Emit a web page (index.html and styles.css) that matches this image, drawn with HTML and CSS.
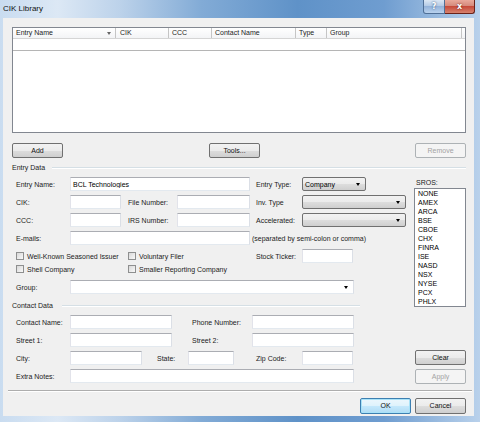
FILE: index.html
```html
<!DOCTYPE html>
<html lang="en">
<head>
    <meta charset="UTF-8">
    <meta name="viewport" content="width=device-width, initial-scale=1.0">
    <title>CIK Library</title>
    <link rel="stylesheet" href="styles.css">
</head>
<body>
    <div class="titlebar">
        <div class="window-title">CIK Library</div>
        <div class="caption-buttons">
            <button class="caption-btn help-btn">?</button>
            <button class="caption-btn close-btn">x</button>
        </div>
    </div>

    <div class="dialog">
        <!-- Entries list -->
        <div class="listview">
            <div class="lv-header">
                <div class="lv-col col-name">Entry Name<span class="sort-arrow"></span></div>
                <div class="lv-col col-cik">CIK</div>
                <div class="lv-col col-ccc">CCC</div>
                <div class="lv-col col-contact">Contact Name</div>
                <div class="lv-col col-type">Type</div>
                <div class="lv-col col-group">Group</div>
            </div>
            <div class="lv-row"></div>
        </div>

        <div class="button-row">
            <button class="btn">Add</button>
            <button class="btn tools-btn">Tools...</button>
            <button class="btn remove-btn" disabled>Remove</button>
        </div>

        <div class="legend">Entry Data</div>

        <div class="main">
            <div class="form">
                <div class="row">
                    <span class="lbl">Entry Name:</span>
                    <input type="text" class="tb w-180" value="BCL Technologies">
                    <span class="lbl-type">Entry Type:</span>
                    <div class="combo w-64">Company</div>
                </div>
                <div class="row">
                    <span class="lbl">CIK:</span>
                    <input type="text" class="tb w-51">
                    <span class="lbl-mid">File Number:</span>
                    <input type="text" class="tb w-73">
                    <span class="lbl-type">Inv. Type</span>
                    <div class="combo w-104"></div>
                </div>
                <div class="row">
                    <span class="lbl">CCC:</span>
                    <input type="text" class="tb w-51">
                    <span class="lbl-mid">IRS Number:</span>
                    <input type="text" class="tb w-73">
                    <span class="lbl-type">Accelerated:</span>
                    <div class="combo w-104"></div>
                </div>
                <div class="row">
                    <span class="lbl">E-mails:</span>
                    <input type="text" class="tb w-180">
                    <span class="note">(separated by semi-colon or comma)</span>
                </div>
                <div class="row">
                    <span class="check-col first"><span class="check"></span>Well-Known Seasoned Issuer</span>
                    <span class="check-col second"><span class="check"></span>Voluntary Filer</span>
                    <span class="lbl-type">Stock Ticker:</span>
                    <input type="text" class="tb w-51">
                </div>
                <div class="row short">
                    <span class="check-col first"><span class="check"></span>Shell Company</span>
                    <span class="check-col second"><span class="check"></span>Smaller Reporting Company</span>
                </div>
                <div class="row group-row">
                    <span class="lbl">Group:</span>
                    <div class="combo combo-edit w-284"></div>
                </div>

                <div class="legend contact-legend">Contact Data</div>

                <div class="contact">
                    <div class="row">
                        <span class="lbl">Contact Name:</span>
                        <input type="text" class="tb w-102">
                        <span class="lbl-contact">Phone Number:</span>
                        <input type="text" class="tb w-102">
                    </div>
                    <div class="row">
                        <span class="lbl">Street 1:</span>
                        <input type="text" class="tb w-102">
                        <span class="lbl-contact">Street 2:</span>
                        <input type="text" class="tb w-102">
                    </div>
                    <div class="row">
                        <span class="lbl">City:</span>
                        <input type="text" class="tb w-72">
                        <span class="lbl-state">State:</span>
                        <input type="text" class="tb w-46">
                        <span class="lbl-zip">Zip Code:</span>
                        <input type="text" class="tb w-51">
                    </div>
                    <div class="row">
                        <span class="lbl">Extra Notes:</span>
                        <input type="text" class="tb w-284">
                    </div>
                </div>
            </div>

            <div class="side">
                <div class="sros-label">SROS:</div>
                <ul class="listbox">
                    <li>NONE</li>
                    <li>AMEX</li>
                    <li>ARCA</li>
                    <li>BSE</li>
                    <li>CBOE</li>
                    <li>CHX</li>
                    <li>FINRA</li>
                    <li>ISE</li>
                    <li>NASD</li>
                    <li>NSX</li>
                    <li>NYSE</li>
                    <li>PCX</li>
                    <li>PHLX</li>
                </ul>
                <button class="btn clear-btn">Clear</button>
                <button class="btn apply-btn" disabled>Apply</button>
            </div>
        </div>

        <div class="separator"></div>

        <div class="footer">
            <button class="btn btn-default">OK</button>
            <button class="btn">Cancel</button>
        </div>
    </div>
</body>
</html>
```

FILE: styles.css
```css
* {
    margin: 0;
    padding: 0;
    box-sizing: border-box;
    font-family: 'Liberation Sans', Arial, sans-serif;
}

body {
    width: 480px;
    height: 422px;
    overflow: hidden;
    font-size: 7px;
    color: #1b1b1b;
    background: linear-gradient(to right, #c9dcf0 0%, #dce8f5 12%, #bcd2ea 25%, #82abd6 42%, #5f92c8 62%, #6f9dd0 80%, #b9d1eb 100%);
}

/* Title bar */
.titlebar {
    display: flex;
    height: 18px;
}

.window-title {
    padding: 4px 0 0 3px;
    font-size: 8px;
    line-height: 9px;
    color: #111;
}

.caption-buttons {
    margin-left: auto;
    margin-right: 5px;
    display: flex;
    height: 14px;
}

.caption-btn {
    height: 14px;
    border: 1px solid;
    border-top: none;
    font-family: 'DejaVu Sans', sans-serif;
    font-weight: bold;
    font-size: 8px;
    line-height: 12px;
    color: #fff;
}

.help-btn {
    width: 22px;
    border-color: #4f6f96;
    border-radius: 0 0 0 3px;
    background: linear-gradient(#dbe7f4, #b4cbe6 45%, #94b3da 50%, #b9d2ee);
    text-shadow: 0 0 2px #23446e;
}

.close-btn {
    width: 30px;
    border-color: #6a2219;
    border-left: none;
    border-radius: 0 0 3px 0;
    background: linear-gradient(#e9a99b, #d58a7c 45%, #c74a3a 50%, #d7836f);
    text-shadow: 0 0 2px #5c1a12;
}

/* Dialog client area */
.dialog {
    margin: 0 6px 0 3px;
    height: 398px;
    padding: 9px 8px 0 9px;
    background: #f0f0f0;
}

/* List view */
.listview {
    height: 106px;
    border: 1px solid #828790;
    background: #fff;
}

.lv-header {
    display: flex;
    height: 11px;
    background: linear-gradient(#fff, #f3f4f6);
    border-bottom: 1px solid #d5d5d5;
}

.lv-col {
    display: flex;
    align-items: center;
    padding-left: 3px;
    border-right: 1px solid #c5c5c5;
    line-height: 10px;
}

.col-name { width: 103px; }
.col-cik { width: 53px; padding-left: 4px; }
.col-ccc { width: 43px; }
.col-contact { width: 84px; }
.col-type { width: 31px; }
.col-group { width: 135px; }

.sort-arrow {
    margin-left: auto;
    margin-right: 4px;
    border-left: 2.5px solid transparent;
    border-right: 2.5px solid transparent;
    border-top: 3px solid #666;
}

.lv-row {
    height: 12px;
    border-bottom: 1px solid #b5b5b5;
}

/* Buttons */
.btn {
    width: 51px;
    height: 15px;
    border: 1px solid #707070;
    border-radius: 2px;
    background: linear-gradient(#f2f2f2, #ebebeb 50%, #dddddd 51%, #cfcfcf);
    font-size: 7px;
    line-height: 13px;
    color: #111;
}

.btn:disabled {
    border-color: #adb2b5;
    background: #f4f4f4;
    color: #a3a3a3;
}

.btn-default {
    border-color: #3c7fb1;
    background: linear-gradient(#ecf7fd, #def2fc 50%, #c4e8fc 51%, #b0dcf4);
    box-shadow: inset 0 0 0 1px #a8e2f8;
}

.button-row {
    display: flex;
    margin-top: 10px;
}

.tools-btn {
    margin-left: 146px;
}

.remove-btn {
    margin-left: auto;
}

/* Group legends */
.legend {
    display: flex;
    align-items: center;
    height: 9px;
    line-height: 9px;
    margin-top: 5px;
}

.legend::after {
    content: "";
    flex: 1;
    margin-left: 7px;
    border-top: 1px solid #d5dfe5;
    border-bottom: 1px solid #fff;
}

.contact-legend {
    width: 348px;
    margin-top: 7px;
}

.contact-legend::after {
    margin-left: 9px;
}

/* Form */
.main {
    display: flex;
    margin-top: 5px;
}

.form {
    width: 398px;
}

.row {
    display: flex;
    align-items: center;
    height: 14px;
    margin-top: 4px;
    line-height: 9px;
}

.row:first-child {
    margin-top: 0;
}

.row.short {
    height: 10px;
    margin-top: 1px;
}

.group-row {
    margin-top: 6px;
}

.contact {
    margin-top: 5px;
}

.lbl {
    width: 58px;
    padding-left: 4px;
}

.lbl-mid {
    width: 56px;
    padding-left: 7px;
}

.lbl-type {
    width: 52px;
    padding-left: 6px;
}

.lbl-contact {
    width: 80px;
    padding-left: 20px;
}

.lbl-state {
    width: 46px;
    padding-left: 15px;
}

.lbl-zip {
    width: 68px;
    padding-left: 22px;
}

.note {
    padding-left: 2px;
}

.tb {
    height: 14px;
    padding: 0 2px;
    border: 1px solid;
    border-color: #abadb3 #dbdfe6 #e3e9ef #e2e3ea;
    background: #fff;
    font-size: 7px;
    color: #000;
    outline: none;
}

.w-46 { width: 46px; }
.w-51 { width: 51px; }
.w-64 { width: 64px; }
.w-72 { width: 72px; }
.w-73 { width: 73px; }
.w-102 { width: 102px; }
.w-104 { width: 104px; }
.w-180 { width: 180px; }
.w-284 { width: 284px; }

.combo {
    display: flex;
    align-items: center;
    height: 14px;
    padding-left: 2px;
    border: 1px solid #707070;
    border-radius: 2px;
    background: linear-gradient(#f2f2f2, #ebebeb 50%, #dddddd 51%, #cfcfcf);
    color: #000;
}

.combo::after {
    content: "";
    margin-left: auto;
    margin-right: 5px;
    border-left: 2.5px solid transparent;
    border-right: 2.5px solid transparent;
    border-top: 3px solid #000;
}

.combo-edit {
    border-radius: 0;
    border-color: #abadb3 #dbdfe6 #e3e9ef #e2e3ea;
    background: #fff;
}

.check-col {
    display: flex;
    align-items: center;
}

.check-col.first {
    width: 116px;
    padding-left: 4px;
}

.check-col.second {
    width: 122px;
}

.check {
    width: 8px;
    height: 8px;
    margin-right: 3px;
    border: 1px solid #8e8f8f;
    background: linear-gradient(135deg, #d8d8d8, #f9f9f9);
}

/* SROS column */
.side {
    margin-left: auto;
    width: 52px;
    display: flex;
    flex-direction: column;
    align-items: flex-end;
}

.sros-label {
    align-self: flex-start;
    margin-top: 1px;
    padding-left: 2px;
    height: 9px;
    line-height: 9px;
}

.listbox {
    width: 52px;
    height: 119px;
    margin-top: 1px;
    padding-left: 3px;
    list-style: none;
    border: 1px solid #828790;
    background: #fff;
    color: #000;
    line-height: 9px;
}

.clear-btn {
    margin-top: 43px;
}

.apply-btn {
    margin-top: 4px;
}

/* Footer */
.separator {
    margin: 6px -6px 0 -4px;
    border-top: 1px solid #adadad;
    border-bottom: 1px solid #fff;
}

.footer {
    display: flex;
    justify-content: flex-end;
    gap: 4px;
    margin-top: 6px;
}

.footer .btn {
    height: 16px;
    line-height: 14px;
}
```
